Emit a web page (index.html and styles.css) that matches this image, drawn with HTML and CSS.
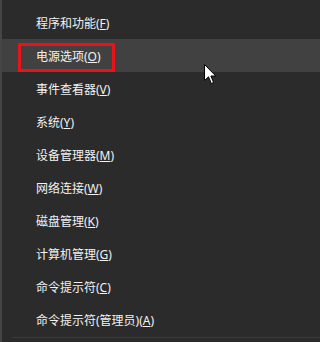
FILE: index.html
```html
<!DOCTYPE html>
<html lang="zh-CN">
<head>
<meta charset="utf-8">
<link rel="stylesheet" href="styles.css">
</head>
<body>
<div class="menu">
  <div class="item">程序和功能(<u>F</u>)</div>
  <div class="item hover">电源选项(<u>O</u>)<span class="mark"></span></div>
  <div class="item">事件查看器(<u>V</u>)</div>
  <div class="item">系统(<u>Y</u>)</div>
  <div class="item">设备管理器(<u>M</u>)</div>
  <div class="item">网络连接(<u>W</u>)</div>
  <div class="item">磁盘管理(<u>K</u>)</div>
  <div class="item">计算机管理(<u>G</u>)</div>
  <div class="item">命令提示符(<u>C</u>)</div>
  <div class="item">命令提示符(管理员)(<u>A</u>)</div>
  <div class="sep"></div>
</div>
<svg class="cursor" width="13" height="21" viewBox="0 0 13 21">
  <polygon points="0.5,0.5 0.5,16.5 4.5,12.8 7.3,19.5 9.6,18.5 6.9,12 11.8,12" fill="#fff" stroke="#000" stroke-width="1" stroke-linejoin="miter"/>
</svg>
</body>
</html>
```
FILE: styles.css
```css
html, body {
  margin: 0;
  padding: 0;
  background: #2b2b2b;
  height: 342px;
  overflow: hidden;
}
.menu {
  box-sizing: border-box;
  height: 342px;
  border-left: 2px solid #454545;
  padding-top: 6px;
  display: flex;
  flex-direction: column;
  font-family: "Noto Sans", "Noto Sans CJK SC", sans-serif;
  font-size: 12px;
  color: #f2f2f2;
}
.item {
  position: relative;
  flex: none;
  height: 33px;
  line-height: 35px;
  padding-left: 34px;
  white-space: nowrap;
}
.item u {
  text-decoration-thickness: 1px;
  text-underline-offset: 1px;
}
.hover {
  background: #414141;
}
.mark {
  position: absolute;
  left: 16px;
  top: 4px;
  width: 97px;
  height: 29px;
  box-sizing: border-box;
  border: 3px solid #e8141b;
}
.sep {
  flex: none;
  margin-top: 1px;
  margin-left: 10px;
  height: 1px;
  background: #393939;
}
.cursor {
  position: absolute;
  left: 204px;
  top: 64px;
}
```
